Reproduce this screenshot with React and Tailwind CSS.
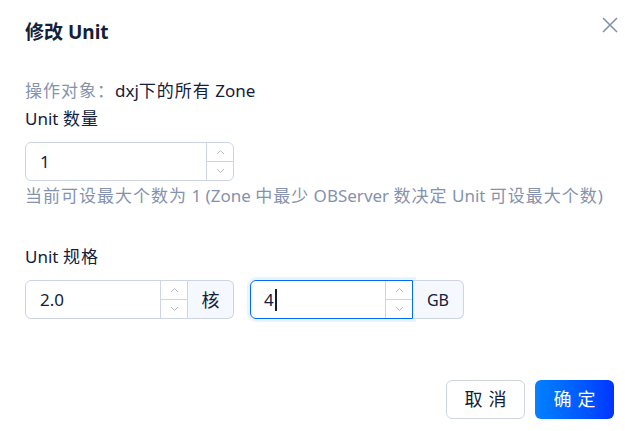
import React from 'react'

const font = { fontFamily: '"Noto Sans", "Noto Sans CJK SC", sans-serif' }

// CJK runs in the reference sit a little wider than the Latin ones
function T({ children }) {
  const parts = String(children).split(/([\u3000-\u9fff\uff00-\uffef]+)/)
  return parts.map((p, i) =>
    i % 2 === 1 ? <span key={i} className='tracking-[1px]'>{p}</span> : p
  )
}

function Stepper() {
  return (
    <div className='flex flex-col w-[27px] border-l border-[#cdd5e4] text-[#b3bccc]'>
      <div className='flex-1 flex items-center justify-center border-b border-[#cdd5e4]'>
        <svg width='9' height='6' viewBox='0 0 9 6' fill='none' stroke='currentColor' strokeWidth='1'>
          <path d='M1 5L4.5 1.5L8 5' />
        </svg>
      </div>
      <div className='flex-1 flex items-center justify-center'>
        <svg width='9' height='6' viewBox='0 0 9 6' fill='none' stroke='currentColor' strokeWidth='1'>
          <path d='M1 1L4.5 4.5L8 1' />
        </svg>
      </div>
    </div>
  )
}

function App() {
  return (
    <div className='w-[625px] h-[431px] bg-white relative text-[#132039]' style={font}>
      <button className='absolute left-[602px] top-[17px] w-[16px] h-[16px] text-[#8592ad]'>
        <svg width='16' height='16' viewBox='0 0 16 16' fill='none' stroke='currentColor' strokeWidth='1.6'>
          <path d='M1 1L15 15M15 1L1 15' />
        </svg>
      </button>

      <header className='pl-[25px] pt-[20px] text-[19px] leading-[24px] font-bold'>修改 Unit</header>

      <main className='px-[25px] mt-[33px] text-[17px] leading-[28px]'>
        <div>
          <span className='text-[#8592ad]'><T>操作对象：</T></span>
          <span><T>dxj下的所有 Zone</T></span>
        </div>
        <div><T>Unit 数量</T></div>

        <div className='mt-[9px] w-[209px] h-[39px] flex border border-[#cdd5e4] rounded-[6px] overflow-hidden'>
          <div className='flex-1 flex items-center pl-[14px]'>1</div>
          <Stepper />
        </div>
        <p className='mt-[1px] text-[#8592ad] whitespace-nowrap'>
          <T>当前可设最大个数为 1 (Zone 中最少 OBServer 数决定 Unit 可设最大个数)</T>
        </p>

        <div className='mt-[33px]'><T>Unit 规格</T></div>
        <div className='mt-[9px] flex gap-[16px]'>
          <div className='flex h-[39px]'>
            <div className='w-[163px] flex border border-[#cdd5e4] rounded-l-[6px] overflow-hidden'>
              <div className='flex-1 flex items-center pl-[14px]'>2.0</div>
              <Stepper />
            </div>
            <div className='w-[46px] flex items-center justify-center border border-l-0 border-[#cdd5e4] rounded-r-[6px] bg-[#f5f8fe] text-[18px]'>核</div>
          </div>

          <div className='flex h-[39px]'>
            <div className='w-[163px] flex border border-[#006aff] rounded-l-[6px] overflow-hidden shadow-[0_0_0_3px_rgba(0,106,255,0.08)]'>
              <div className='flex-1 flex items-center pl-[13px]'>
                4<span className='inline-block w-[2px] h-[22px] bg-[#132039] ml-[1px]'></span>
              </div>
              <Stepper />
            </div>
            <div className='w-[51px] flex items-center justify-center border border-l-0 border-[#cdd5e4] rounded-r-[6px] bg-[#f5f8fe] text-[16px]'>GB</div>
          </div>
        </div>
      </main>

      <footer className='flex justify-end gap-[10px] pr-[11px] mt-[61px]'>
        <button className='w-[79px] h-[39px] border border-[#cdd5e4] rounded-[6px] text-[18px] tracking-[6px] pl-[6px] bg-white'>取消</button>
        <button className='w-[79px] h-[39px] rounded-[6px] text-[18px] tracking-[6px] pl-[6px] text-white bg-gradient-to-r from-[#0a80ff] to-[#0033ff]'>确定</button>
      </footer>
    </div>
  )
}

export default App
